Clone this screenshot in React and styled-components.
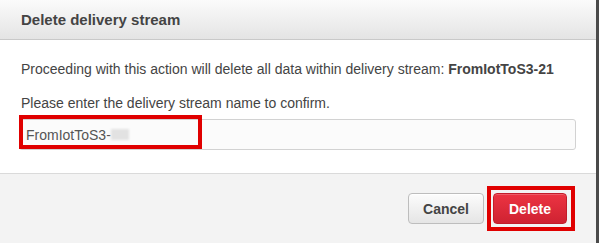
import React from "react";
import styled, { createGlobalStyle } from "styled-components";

const GlobalStyle = createGlobalStyle`
  html, body {
    margin: 0;
    padding: 0;
    background: #4a4a4a;
  }
  body {
    font-family: "Liberation Sans", Arial, Helvetica, sans-serif;
  }
`;

const Modal = styled.div`
  width: 596px;
  height: 243px;
  background: #fff;
  display: flex;
  flex-direction: column;
  overflow: hidden;
`;

const Header = styled.div`
  height: 39px;
  flex-shrink: 0;
  display: flex;
  align-items: center;
  padding: 0 21px;
  border-bottom: 1px solid #c9c9c9;
  background: linear-gradient(to bottom, #fbfbfb 0%, #e4e4e4 100%);
`;

const Title = styled.h2`
  margin: 0;
  font-size: 15px;
  font-weight: bold;
  color: #444;
`;

const Body = styled.div`
  height: 133px;
  flex-shrink: 0;
  padding: 20px 20px 0 19px;
  box-sizing: border-box;
  color: #444;
  font-size: 14px;
`;

const Text = styled.p`
  margin: 0 0 ${(p) => p.gap || 0}px 2px;
  line-height: 18px;
`;

const InputWrap = styled.div`
  position: relative;
  width: 557px;
`;

const Input = styled.div`
  height: 31px;
  box-sizing: border-box;
  border: 1px solid #d2d2d2;
  border-radius: 3px;
  background: #fbfbfb;
  display: flex;
  align-items: center;
  padding-left: 6px;
  font-size: 14px;
  color: #555;
`;

const Blur = styled.span`
  display: inline-block;
  width: 18px;
  height: 11px;
  background: #e2e2e2;
  filter: blur(1px);
`;

const Highlight = styled.div`
  position: absolute;
  left: ${(p) => p.left}px;
  top: ${(p) => p.top}px;
  width: ${(p) => p.width}px;
  height: ${(p) => p.height}px;
  border: 4px solid #e00000;
  box-sizing: border-box;
  pointer-events: none;
`;

const Footer = styled.div`
  flex: 1;
  border-top: 1px solid #dadada;
  background: #f3f3f3;
  display: flex;
  justify-content: flex-end;
  align-items: flex-start;
  padding: 19px 29px 0 0;
  gap: 9px;
`;

const ButtonWrap = styled.div`
  position: relative;
`;

const Button = styled.button`
  width: ${(p) => p.w}px;
  height: 31px;
  padding: 0;
  font-family: inherit;
  font-size: 14px;
  font-weight: bold;
  border-radius: 4px;
  cursor: pointer;
  color: ${(p) => (p.danger ? "#fff" : "#444")};
  border: 1px solid ${(p) => (p.danger ? "#c21d2b" : "#bdbdbd")};
  background: ${(p) =>
    p.danger
      ? "linear-gradient(to bottom, #ec3442 0%, #cf2232 100%)"
      : "linear-gradient(to bottom, #fcfcfc 0%, #e5e5e5 100%)"};
  box-shadow: ${(p) =>
    p.danger ? "inset 0 1px 0 rgba(255,255,255,0.2)" : "inset 0 1px 0 #fff"};
`;

export default function App() {
  return (
    <>
      <GlobalStyle />
      <Modal>
        <Header>
          <Title>Delete delivery stream</Title>
        </Header>
        <Body>
          <Text gap={16}>
            Proceeding with this action will delete all data within delivery
            stream: <b>FromIotToS3-21</b>
          </Text>
          <Text gap={7}>Please enter the delivery stream name to confirm.</Text>
          <InputWrap>
            <Input>
              FromIotToS3-<Blur />
            </Input>
            <Highlight left={0} top={-4} width={183} height={34} />
          </InputWrap>
        </Body>
        <Footer>
          <Button w={76}>Cancel</Button>
          <ButtonWrap>
            <Button danger w={74}>
              Delete
            </Button>
            <Highlight left={-6} top={-7} width={88} height={45} />
          </ButtonWrap>
        </Footer>
      </Modal>
    </>
  );
}
